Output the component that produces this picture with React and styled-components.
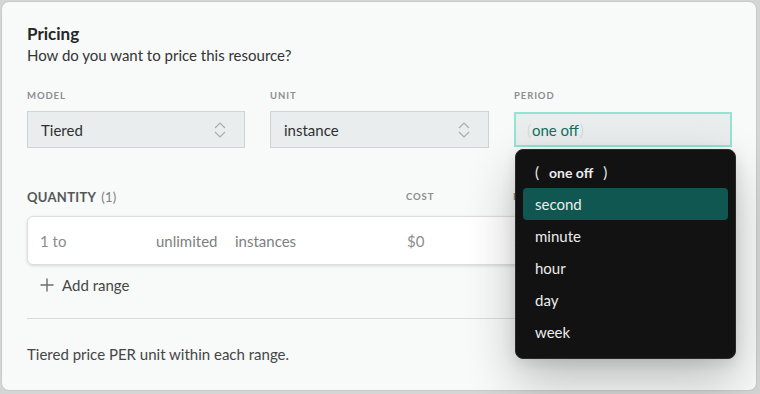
import React from 'react';
import styled, { createGlobalStyle } from 'styled-components';

const GlobalStyle = createGlobalStyle`
  html, body {
    margin: 0;
    padding: 0;
    background: #d4d5d5;
  }
  body {
    font-family: Lato, "Liberation Sans", sans-serif;
    color: #2b2d2d;
  }
`;

const periods = ['second', 'minute', 'hour', 'day', 'week'];

const Chevrons = () => (
  <svg width="14" height="18" viewBox="0 0 14 18" fill="none" stroke="#a9adad" strokeWidth="1.2">
    <path d="M2 7 L7 2 L12 7" />
    <path d="M2 11 L7 16 L12 11" />
  </svg>
);

const Plus = () => (
  <svg width="14" height="14" viewBox="0 0 14 14" stroke="#6b6e6e" strokeWidth="1.4">
    <path d="M7 0.5 V13.5 M0.5 7 H13.5" />
  </svg>
);

const App = () => {
  return (
    <>
      <GlobalStyle />
      <StyledPage>
        <StyledCard>
          <StyledTitle>Pricing</StyledTitle>
          <StyledSubtitle>How do you want to price this resource?</StyledSubtitle>

          <StyledFields>
            <StyledField>
              <StyledLabel>Model</StyledLabel>
              <StyledSelect>
                <span>Tiered</span>
                <Chevrons />
              </StyledSelect>
            </StyledField>
            <StyledField>
              <StyledLabel>Unit</StyledLabel>
              <StyledSelect>
                <span>instance</span>
                <Chevrons />
              </StyledSelect>
            </StyledField>
            <StyledField>
              <StyledLabel>Period</StyledLabel>
              <StyledSelect $focused>
                <span>
                  <StyledCaret>(</StyledCaret>one off<StyledCaret>)</StyledCaret>
                </span>
              </StyledSelect>
              <StyledMenu>
                <StyledOption>
                  <span>(</span>
                  <b>one off</b>
                  <span>)</span>
                </StyledOption>
                {periods.map((p, i) => (
                  <StyledOption key={p} $active={i === 0}>
                    {p}
                  </StyledOption>
                ))}
              </StyledMenu>
            </StyledField>
          </StyledFields>

          <StyledTableHead>
            <StyledQuantity>
              Quantity <span>(1)</span>
            </StyledQuantity>
            <StyledLabel>Cost</StyledLabel>
            <StyledLabel>Fee</StyledLabel>
          </StyledTableHead>
          <StyledTable>
            <StyledRange>
              <span className="from">1 to</span>
              <span className="to">unlimited</span>
              <span>instances</span>
            </StyledRange>
            <span>$0</span>
            <span>$0</span>
          </StyledTable>

          <StyledAddRange>
            <Plus />
            Add range
          </StyledAddRange>

          <StyledDivider />
          <StyledNote>Tiered price PER unit within each range.</StyledNote>
        </StyledCard>
      </StyledPage>
    </>
  );
};

export default App;

const StyledPage = styled.div`
  width: 760px;
  height: 394px;
  box-sizing: border-box;
  padding: 1px 3px 3px 1px;
  overflow: hidden;
`;

const StyledCard = styled.section`
  position: relative;
  height: 100%;
  box-sizing: border-box;
  background: #f8f9f9;
  border: 1px solid #c8caca;
  border-radius: 8px;
  padding: 22px 22px 0 25px;
`;

const StyledTitle = styled.h2`
  margin: 0;
  font-size: 17px;
  font-weight: 700;
  line-height: 20px;
  color: #252727;
`;

const StyledSubtitle = styled.p`
  margin: 1px 0 0;
  font-size: 15px;
  line-height: 20px;
  color: #333535;
`;

const StyledFields = styled.div`
  display: grid;
  grid-template-columns: 218px 219px 218px;
  column-gap: 25px;
  margin-top: 25px;
`;

const StyledField = styled.div`
  position: relative;
  display: flex;
  flex-direction: column;
`;

const StyledLabel = styled.span`
  font-size: 9.5px;
  font-weight: 700;
  letter-spacing: 0.9px;
  text-transform: uppercase;
  color: #8b8e8e;
  line-height: 12px;
`;

const StyledSelect = styled.div`
  margin-top: 9px;
  height: 37px;
  box-sizing: border-box;
  display: flex;
  align-items: center;
  justify-content: space-between;
  padding: 0 17px 0 13px;
  background: #eaeded;
  border: ${(p) => (p.$focused ? '2px solid #93e4d2' : '1px solid #cfd3d3')};
  padding-left: ${(p) => (p.$focused ? '10px' : '13px')};
  font-size: 15px;
  color: ${(p) => (p.$focused ? '#10705f' : '#2f3131')};
  ${(p) => p.$focused && 'margin-top: 10px; height: 35px; width: 218px;'}
`;

const StyledCaret = styled.span`
  font-weight: 300;
  color: #b8d3cd;
  margin: 0 1px;
`;

const StyledMenu = styled.ul`
  position: absolute;
  top: 59px;
  left: 1px;
  z-index: 2;
  width: 221px;
  height: 210px;
  box-sizing: border-box;
  margin: 0;
  padding: 6px 7px;
  list-style: none;
  overflow: hidden;
  background: #121212;
  border: 1px solid #2a2a2a;
  border-radius: 8px;
  box-shadow: 0 22px 50px rgba(0, 0, 0, 0.24), 0 4px 14px rgba(0, 0, 0, 0.1);
`;

const StyledOption = styled.li`
  height: 32px;
  display: flex;
  align-items: center;
  gap: 10px;
  padding: 0 12px;
  border-radius: 4px;
  font-size: 15px;
  color: #ececec;
  background: ${(p) => (p.$active ? '#0f5750' : 'transparent')};

  b {
    font-weight: 700;
    font-size: 14px;
  }
`;

const StyledTableHead = styled.div`
  display: grid;
  grid-template-columns: 379px 107px 1fr;
  align-items: center;
  margin-top: 41px;
  padding-bottom: 11px;
`;

const StyledQuantity = styled.span`
  font-size: 13px;
  font-weight: 700;
  letter-spacing: 0.3px;
  text-transform: uppercase;
  color: #545757;

  span {
    font-weight: 400;
    color: #7d8080;
    margin-left: 2px;
  }
`;

const StyledTable = styled.div`
  display: grid;
  grid-template-columns: 379px 107px 1fr;
  align-items: center;
  width: 706px;
  height: 49px;
  box-sizing: border-box;
  background: #fff;
  border: 1px solid #dcdfdf;
  border-radius: 6px;
  box-shadow: 0 1px 3px rgba(0, 0, 0, 0.14);
  font-size: 15px;
  color: #8a8d8d;
`;

const StyledRange = styled.div`
  display: flex;
  align-items: center;
  padding-left: 12px;

  .from {
    width: 116px;
  }
  .to {
    width: 79px;
    color: #7d8080;
  }
  span:last-child {
    color: #7d8080;
  }
`;

const StyledAddRange = styled.button`
  display: flex;
  align-items: center;
  gap: 8px;
  margin: 11px 0 0 13px;
  padding: 0;
  border: none;
  background: none;
  font-family: inherit;
  font-size: 15px;
  color: #454747;
`;

const StyledDivider = styled.hr`
  width: 706px;
  margin: 24px 0 0;
  border: none;
  border-top: 1px solid #d9dcdc;
`;

const StyledNote = styled.p`
  margin: 25px 0 0;
  font-size: 15px;
  line-height: 20px;
  color: #444646;
`;
